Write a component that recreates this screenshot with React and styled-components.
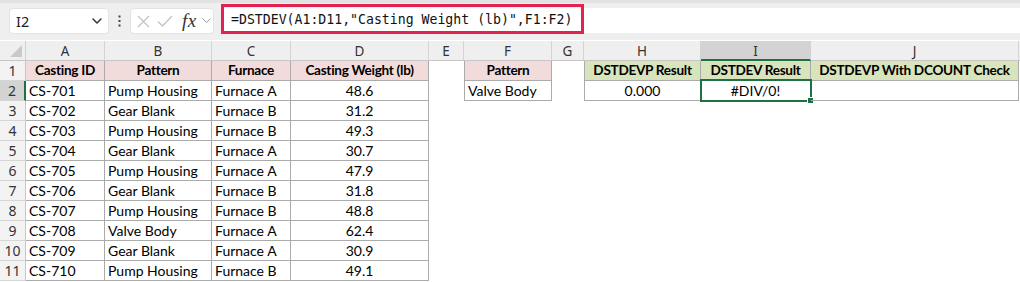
import React from 'react'
import styled, { createGlobalStyle } from 'styled-components'

const GlobalStyle = createGlobalStyle`
  html, body { margin: 0; padding: 0; background: #ffffff; }
  body { font-family: Lato, "Liberation Sans", sans-serif; }
`

const COLS = '26px 79px 107px 79px 138px 35px 88px 32px 117px 110px 208px 1fr'

const Page = styled.div`
  width: 1020px;
  height: 282px;
  overflow: hidden;
  background: #ffffff;
`

const Toolbar = styled.div`
  height: 40px;
  box-sizing: border-box;
  background: #efefef;
  border-top: 3px solid #e2e2e2;
  padding: 5px 0 0 9px;
  display: flex;
  align-items: flex-start;
`

const NameBox = styled.div`
  width: 100px;
  height: 26px;
  box-sizing: border-box;
  background: #fff;
  border: 1px solid #e3e3e3;
  border-radius: 4px;
  display: flex;
  align-items: center;
  justify-content: space-between;
  padding: 0 6px 0 6px;
  font-family: "Noto Sans", "Open Sans", sans-serif;
  font-size: 14.5px;
  color: #222;
`

const Dots = styled.div`
  width: 21px;
  height: 26px;
  display: flex;
  align-items: center;
  justify-content: center;
`

const FnBox = styled.div`
  width: 84px;
  height: 26px;
  box-sizing: border-box;
  background: #fff;
  border: 1px solid #e3e3e3;
  border-radius: 4px;
  display: flex;
  align-items: center;
  padding: 0 0 0 6px;
  gap: 7px;
`

const Fx = styled.span`
  font-family: "Liberation Serif", serif;
  font-style: italic;
  font-size: 19px;
  line-height: 20px;
  color: #333;
  margin-left: 2px;
  margin-right: -2px;
  letter-spacing: 0.5px;
`

const FormulaArea = styled.div`
  flex: 1;
  height: 25px;
  margin-left: 7px;
  background: #fff;
  display: flex;
  align-items: flex-start;
`

const Highlight = styled.div`
  margin-top: -4px;
  height: 30px;
  box-sizing: border-box;
  border: 3px solid #e3224f;
  display: flex;
  align-items: center;
  padding: 0 9px 0 7px;
  font-family: "DejaVu Sans Mono", "Liberation Mono", monospace;
  font-size: 13.2px;
  color: #111;
  white-space: pre;
`

const Sheet = styled.div`
  display: grid;
  grid-template-columns: ${COLS};
  grid-auto-rows: 20px;
  margin-top: 1px;
`

const Corner = styled.div`
  background: #efefef;
  border-right: 1px solid #d0d0d0;
  border-bottom: 1px solid #c6c6c6;
  box-sizing: border-box;
  display: flex;
  align-items: flex-end;
  justify-content: flex-end;
  padding: 0 3px 3px 0;
`

const ColHead = styled.div`
  box-sizing: border-box;
  background: ${p => (p.$active ? '#d3d3d3' : '#efefef')};
  border-right: 1px solid ${p => (p.$last ? 'transparent' : '#d3d3d3')};
  border-bottom: ${p => (p.$active ? '2px solid #1f7144' : '1px solid #c6c6c6')};
  display: flex;
  align-items: center;
  justify-content: center;
  font-family: "Noto Sans", "Open Sans", sans-serif;
  font-size: 13.5px;
  color: #333;
  padding-top: ${p => (p.$active ? '1px' : '0')};
`

const RowHead = styled.div`
  box-sizing: border-box;
  background: ${p => (p.$active ? '#d3d3d3' : '#f3f3f3')};
  border-right: ${p => (p.$active ? '2px solid #1f7144' : '1px solid #c6c6c6')};
  border-bottom: 1px solid #d6d6d6;
  display: flex;
  align-items: center;
  justify-content: center;
  font-family: "Noto Sans", "Open Sans", sans-serif;
  font-size: 14px;
  color: #333;
`

const Cell = styled.div`
  position: relative;
  box-sizing: border-box;
  background: ${p => p.$fill || 'transparent'};
  border-right: ${p => (p.$box ? '1px solid #ababab' : 'none')};
  border-bottom: ${p => (p.$box ? '1px solid #ababab' : 'none')};
  border-left: ${p => (p.$left ? '1px solid #ababab' : 'none')};
  font-weight: ${p => (p.$bold ? 700 : 400)};
  letter-spacing: ${p => (p.$bold ? '-0.3px' : '0')};
  text-align: ${p => p.$align || 'left'};
  font-size: ${p => (p.$bold ? '13.6px' : '14px')};
  line-height: 19px;
  color: #000;
  padding: 0 3px;
  white-space: nowrap;
  overflow: visible;
`

const Selection = styled.div`
  position: absolute;
  left: -1px;
  top: -2px;
  right: -2px;
  bottom: -2px;
  border: 2px solid #1f7144;
  pointer-events: none;
  &::after {
    content: '';
    position: absolute;
    right: -4px;
    bottom: -4px;
    width: 5px;
    height: 5px;
    background: #1f7144;
    border: 1px solid #fff;
  }
`

const PINK = '#f2dcdb'
const GREEN = '#d8e4bc'

const data = [
  ['CS-701', 'Pump Housing', 'Furnace A', '48.6'],
  ['CS-702', 'Gear Blank', 'Furnace B', '31.2'],
  ['CS-703', 'Pump Housing', 'Furnace B', '49.3'],
  ['CS-704', 'Gear Blank', 'Furnace A', '30.7'],
  ['CS-705', 'Pump Housing', 'Furnace A', '47.9'],
  ['CS-706', 'Gear Blank', 'Furnace B', '31.8'],
  ['CS-707', 'Pump Housing', 'Furnace B', '48.8'],
  ['CS-708', 'Valve Body', 'Furnace A', '62.4'],
  ['CS-709', 'Gear Blank', 'Furnace A', '30.9'],
  ['CS-710', 'Pump Housing', 'Furnace B', '49.1'],
]

const letters = ['A', 'B', 'C', 'D', 'E', 'F', 'G', 'H', 'I', 'J']

const Chevron = ({ size = 10, color = '#333', width = 1.5 }) => (
  <svg width={size} height={size * 0.6} viewBox="0 0 10 6">
    <path d="M1 1 L5 5 L9 1" fill="none" stroke={color} strokeWidth={width} strokeLinecap="round" strokeLinejoin="round" />
  </svg>
)

const Empty = () => <Cell />

export default function App() {
  return (
    <Page>
      <GlobalStyle />
      <Toolbar>
        <NameBox>
          <span>I2</span>
          <Chevron />
        </NameBox>
        <Dots>
          <svg width="3" height="12" viewBox="0 0 3 12">
            <rect x="0.5" y="0.5" width="2" height="2" fill="#444" />
            <rect x="0.5" y="5" width="2" height="2" fill="#444" />
            <rect x="0.5" y="9.5" width="2" height="2" fill="#444" />
          </svg>
        </Dots>
        <FnBox>
          <svg width="13" height="13" viewBox="0 0 13 13">
            <path d="M1 1 L12 12 M12 1 L1 12" stroke="#c4c4c4" strokeWidth="1.3" fill="none" />
          </svg>
          <svg width="16" height="12" viewBox="0 0 16 12">
            <path d="M1 6.5 L5.5 11 L15 1" stroke="#c4c4c4" strokeWidth="1.3" fill="none" />
          </svg>
          <Fx>fx</Fx>
          <Chevron size={9} color="#999" width={1.1} />
        </FnBox>
        <FormulaArea>
          <Highlight>=DSTDEV(A1:D11,"Casting Weight (lb)",F1:F2)</Highlight>
        </FormulaArea>
      </Toolbar>

      <Sheet>
        <Corner>
          <svg width="12" height="12" viewBox="0 0 12 12">
            <polygon points="12,0 12,12 0,12" fill="#c9c9c9" />
          </svg>
        </Corner>
        {letters.map(l => (
          <ColHead key={l} $active={l === 'I'}>{l}</ColHead>
        ))}
        <ColHead $last />

        <RowHead>1</RowHead>
        <Cell $box $fill={PINK} $bold $align="center">Casting ID</Cell>
        <Cell $box $fill={PINK} $bold $align="center">Pattern</Cell>
        <Cell $box $fill={PINK} $bold $align="center">Furnace</Cell>
        <Cell $box $fill={PINK} $bold $align="center">Casting Weight (lb)</Cell>
        <Empty />
        <Cell $box $left $fill={PINK} $bold $align="center">Pattern</Cell>
        <Empty />
        <Cell $box $left $fill={GREEN} $bold $align="center">DSTDEVP Result</Cell>
        <Cell $box $fill={GREEN} $bold $align="center">DSTDEV Result</Cell>
        <Cell $box $fill={GREEN} $bold $align="center">DSTDEVP With DCOUNT Check</Cell>
        <Empty />

        {data.map((row, i) => (
          <React.Fragment key={row[0]}>
            <RowHead $active={i === 0}>{i + 2}</RowHead>
            <Cell $box>{row[0]}</Cell>
            <Cell $box>{row[1]}</Cell>
            <Cell $box>{row[2]}</Cell>
            <Cell $box $align="center">{row[3]}</Cell>
            <Empty />
            {i === 0 ? (
              <>
                <Cell $box $left>Valve Body</Cell>
                <Empty />
                <Cell $box $left $align="center">0.000</Cell>
                <Cell $box $align="center">
                  #DIV/0!
                  <Selection />
                </Cell>
                <Cell $box />
              </>
            ) : (
              <>
                <Empty />
                <Empty />
                <Empty />
                <Empty />
                <Empty />
              </>
            )}
            <Empty />
          </React.Fragment>
        ))}
      </Sheet>
    </Page>
  )
}
